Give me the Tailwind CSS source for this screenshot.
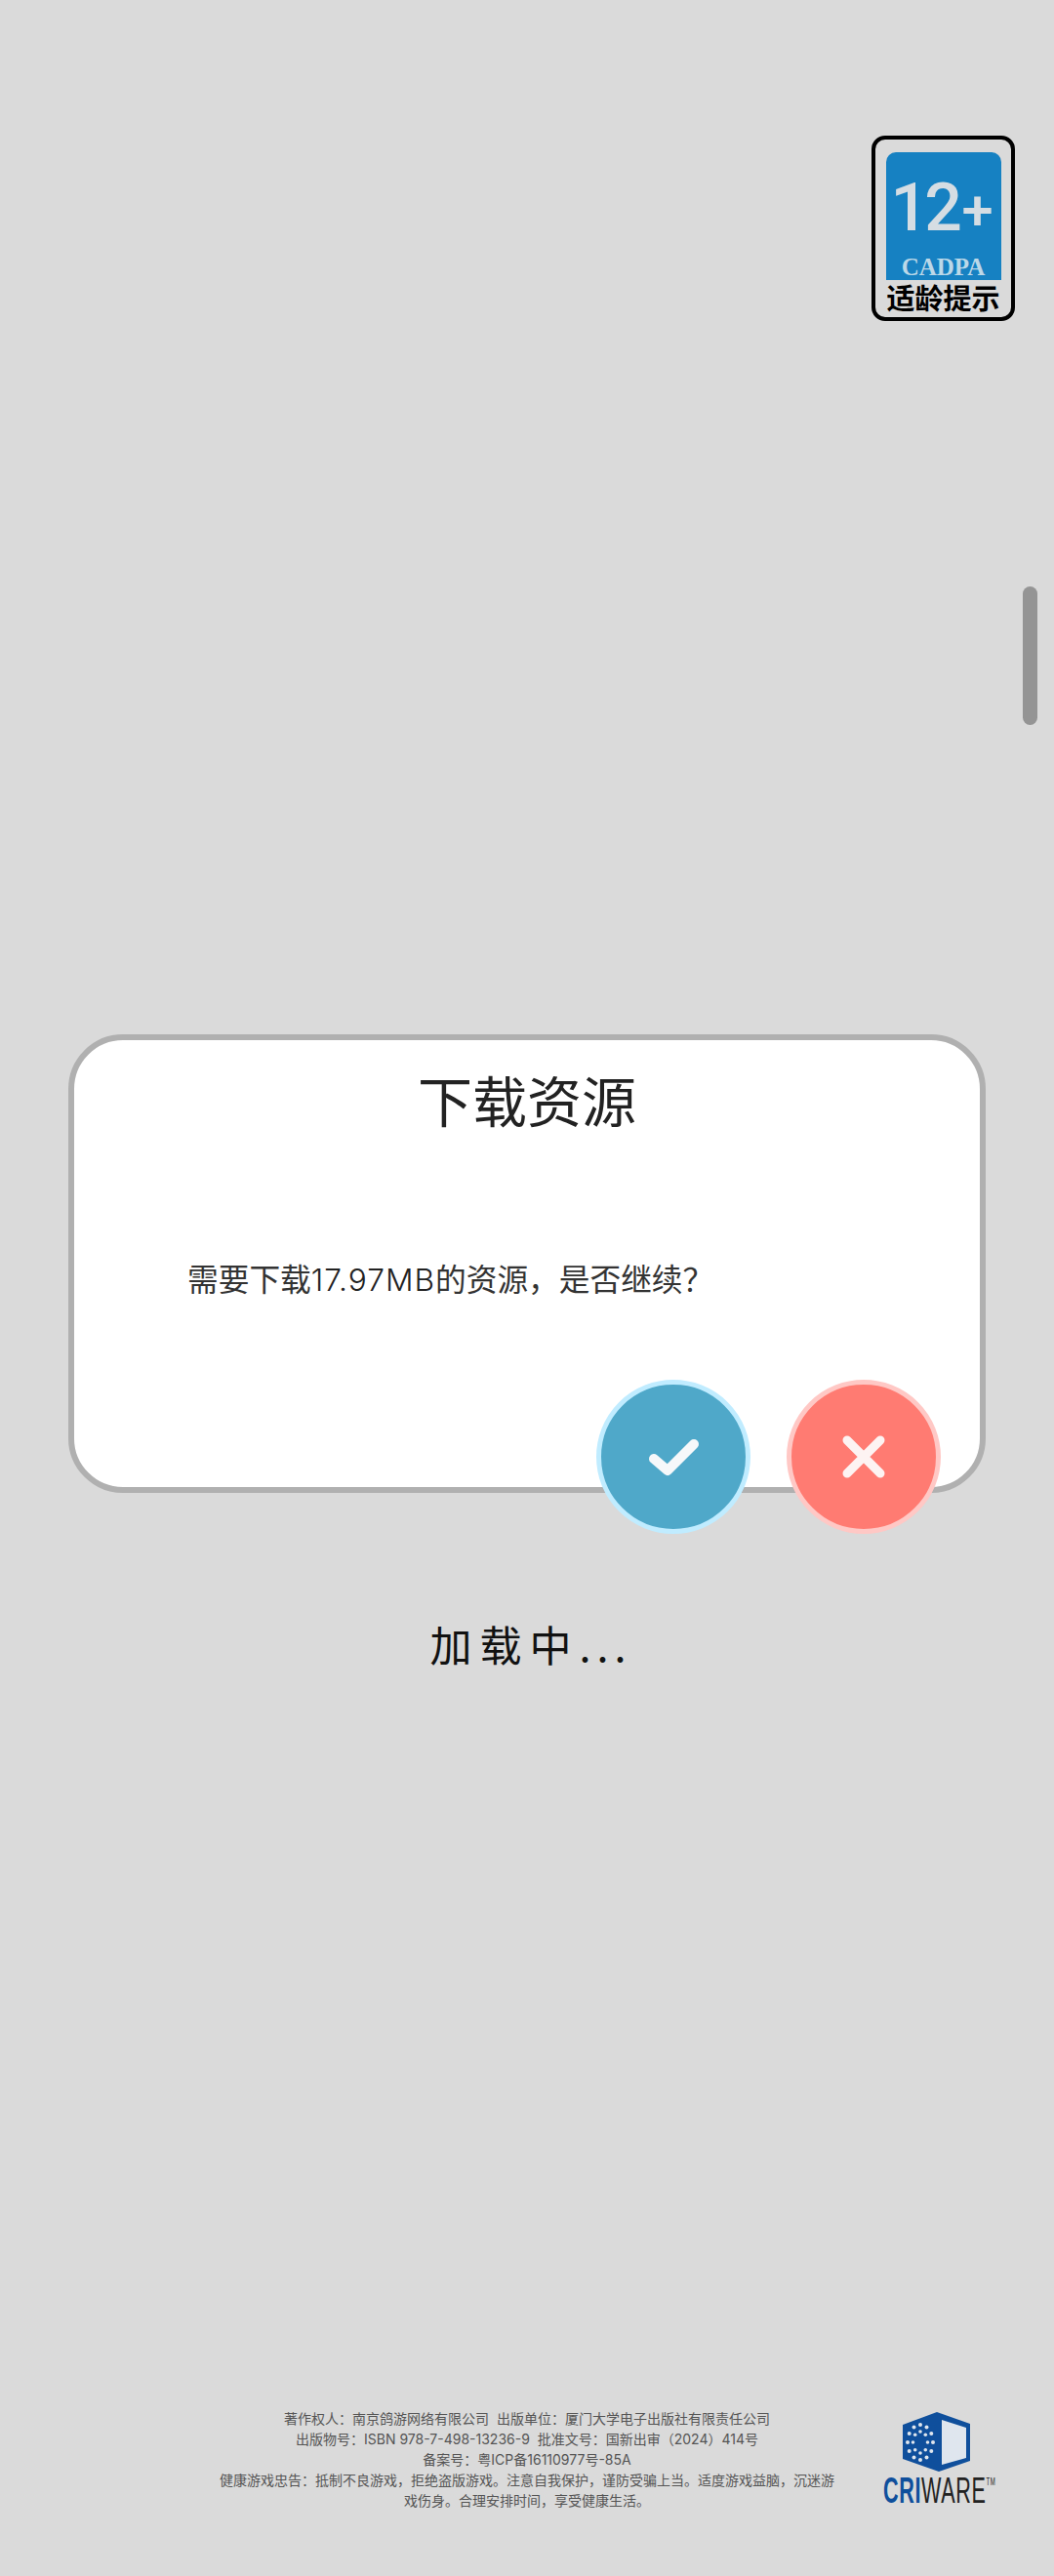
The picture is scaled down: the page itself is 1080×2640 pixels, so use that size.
<!DOCTYPE html>
<html lang="zh-CN">
  <head>
    <meta charset="UTF-8" />
    <meta name="viewport" content="width=device-width, initial-scale=1.0" />
    <title>下载资源</title>
    <script src="https://cdn.jsdelivr.net/npm/@tailwindcss/browser@4"></script>
  </head>
  <body class="bg-[#dadada] font-['Inter','Noto_Sans_CJK_SC',sans-serif]">
    <main class="relative flex flex-col h-[2640px] w-[1080px] overflow-hidden">
      <!-- 适龄提示 -->
      <div class="flex justify-end pt-[139px] pr-[40px]">
        <div class="flex flex-col items-center w-[147px] h-[190px] border-[4px] border-black rounded-[14px] pt-[13px]">
          <div class="relative w-[118px] h-[131px] bg-[#1681c2] rounded-t-[10px] text-center">
            <span class="absolute left-[5px] top-[17px] font-['Roboto',sans-serif] font-medium text-[68px] leading-[80px] tracking-[-4px] text-[#d5dde3]">12</span>
            <span class="absolute left-[78px] top-[25px] font-['Roboto',sans-serif] font-medium text-[58px] leading-[68px] text-[#d5dde3]">+</span>
            <span class="absolute inset-x-0 top-[103px] font-['Liberation_Serif',serif] font-bold text-[25px] leading-[30px] text-[#bcd8e8]">CADPA</span>
          </div>
          <div class="font-['Noto_Sans_CJK_SC',sans-serif] font-bold text-[29px] leading-[34px] text-black whitespace-nowrap">适龄提示</div>
        </div>
      </div>

      <!-- 弹窗 -->
      <section class="relative w-[940px] h-[470px] mt-[731px] ml-[70px] bg-white border-[6px] border-[#b0b0b0] rounded-[56px]">
        <h2 class="mt-[29px] text-center text-[56px] leading-[70px] font-normal text-[#222]">下载资源</h2>
        <p class="mt-[124px] ml-[116px] text-[31.7px] leading-[46px] font-normal text-[#333] whitespace-nowrap">需要下载<span class="font-light tracking-[1px] text-[#222]">17.97MB</span>的资源，是否继续？</p>
        <div class="absolute top-[348px] right-[40px] flex gap-[37px]">
          <button type="button" class="flex items-center justify-center w-[158px] h-[158px] rounded-full bg-[#4fa8c9] border-[5px] border-[#c0ecff]">
            <svg width="60" height="48" viewBox="0 0 60 48" fill="none" stroke="#f6f8fa" stroke-width="10" stroke-linecap="round" stroke-linejoin="round">
              <path d="M10 26 L24 38 L51 11" />
            </svg>
          </button>
          <button type="button" class="flex items-center justify-center w-[158px] h-[158px] rounded-full bg-[#ff7b72] border-[5px] border-[#ffc8c5]">
            <svg width="48" height="48" viewBox="0 0 48 48" fill="none" stroke="#fdf3f2" stroke-width="9" stroke-linecap="round">
              <path d="M7 7 L41 41 M41 7 L7 41" />
            </svg>
          </button>
        </div>
      </section>

      <p class="mt-[124px] pl-[8px] text-center text-[43px] leading-[60px] tracking-[8px] text-[#111] font-['Noto_Sans_CJK_SC',sans-serif] font-normal">加载中<span class="tracking-[6px]">...</span></p>

      <!-- 底部 -->
      <footer class="relative mt-auto mb-[67px] h-[105px]">
        <div class="w-[640px] mx-auto text-center text-[14px] leading-[21px] text-[#555]">
          <p>著作权人：南京鸽游网络有限公司&nbsp;&nbsp;出版单位：厦门大学电子出版社有限责任公司</p>
          <p>出版物号：ISBN 978-7-498-13236-9&nbsp;&nbsp;批准文号：国新出审（2024）414号</p>
          <p>备案号：粤ICP备16110977号-85A</p>
          <p>健康游戏忠告：抵制不良游戏，拒绝盗版游戏。注意自我保护，谨防受骗上当。适度游戏益脑，沉迷游戏伤身。合理安排时间，享受健康生活。</p>
        </div>
        <div class="absolute left-[905px] top-[4px] w-[110px]">
          <svg class="ml-[20px] block" width="69" height="61" viewBox="0 0 69 61">
            <path d="M35 0 L69 12 L69 50 L37 61 L0 48 L0 13 Z" fill="#0f4f9c" />
            <path d="M40 8 L65 16 L65 47 L40 54 Z" fill="#dfe6ee" />
            <g fill="#dfe6ee">
              <circle cx="31" cy="31" r="2" /><circle cx="29.3" cy="40" r="2" /><circle cx="24.5" cy="46.6" r="2" /><circle cx="18" cy="49" r="2" />
              <circle cx="11.5" cy="46.6" r="2" /><circle cx="6.7" cy="40" r="2" /><circle cx="5" cy="31" r="2" /><circle cx="6.7" cy="22" r="2" />
              <circle cx="11.5" cy="15.4" r="2" /><circle cx="18" cy="13" r="2" /><circle cx="24.5" cy="15.4" r="2" /><circle cx="29.3" cy="22" r="2" />
              <circle cx="25.5" cy="31" r="1.8" /><circle cx="23.3" cy="38.8" r="1.8" /><circle cx="18" cy="42" r="1.8" /><circle cx="12.7" cy="38.8" r="1.8" />
              <circle cx="10.5" cy="31" r="1.8" /><circle cx="12.7" cy="23.2" r="1.8" /><circle cx="18" cy="20" r="1.8" /><circle cx="23.3" cy="23.2" r="1.8" />
            </g>
          </svg>
          <div class="mt-[6px] flex items-start whitespace-nowrap origin-left scale-x-[0.6] font-['Liberation_Sans',sans-serif] text-[36px] leading-[28px] tracking-[1px]">
            <span class="font-bold text-[#0f4f9c]">CRI</span><span class="font-normal text-[#222]">WARE</span><span class="text-[10px] leading-[10px] text-[#222]">TM</span>
          </div>
        </div>
      </footer>

      <!-- 滚动条 -->
      <div class="absolute left-[1048px] top-[601px] w-[15px] h-[142px] rounded-full bg-[#949494]"></div>
    </main>
  </body>
</html>
